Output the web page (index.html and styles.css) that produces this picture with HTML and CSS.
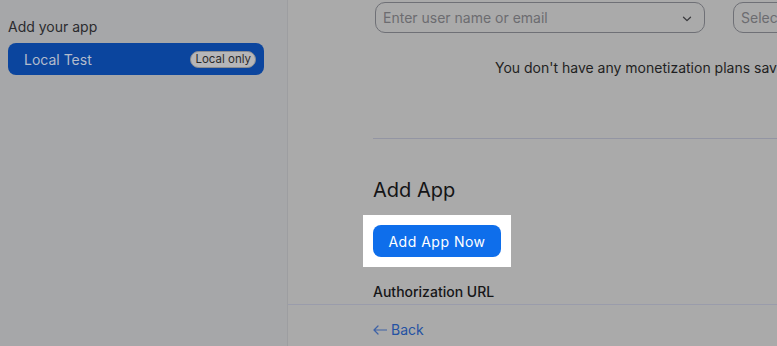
FILE: index.html
```html
<!DOCTYPE html>
<html lang="en">
<head>
<meta charset="utf-8">
<title>Add App</title>
<link rel="stylesheet" href="styles.css">
</head>
<body>
<div class="layout">
  <aside class="sidebar">
    <div class="side-title">Add your app</div>
    <div class="app-item">
      <span class="app-name">Local Test</span>
      <span class="badge">Local only</span>
    </div>
  </aside>
  <main class="main">
    <div class="content">
      <div class="filters">
        <div class="field user-field">
          <span class="placeholder">Enter user name or email</span>
          <svg class="chev" width="10" height="6" viewBox="0 0 10 6"><path d="M1.5 1.2 L5 4.6 L8.5 1.2" fill="none" stroke="#3a3a3d" stroke-width="1.3" stroke-linecap="round" stroke-linejoin="round"/></svg>
        </div>
        <div class="field select-field">
          <span class="placeholder">Select</span>
        </div>
      </div>
      <p class="empty-msg">You don't have any monetization plans saved yet.</p>
      <hr class="divider">
      <h2 class="section-title">Add App</h2>
      <div class="spotlight">
        <button class="btn-primary">Add App Now</button>
      </div>
      <div class="field-label">Authorization URL</div>
    </div>
    <footer class="footer">
      <a class="back-link" href="#">
        <svg width="14" height="10" viewBox="0 0 14 10"><path d="M13.5 5 H1 M5 1 L1 5 L5 9" fill="none" stroke="#3e62a6" stroke-width="1.2" stroke-linecap="round" stroke-linejoin="round"/></svg>
        <span>Back</span>
      </a>
    </footer>
  </main>
</div>
</body>
</html>
```
FILE: styles.css
```css
* { box-sizing: border-box; }
html, body {
  margin: 0;
  padding: 0;
  height: 100%;
  overflow: hidden;
}
body {
  font-family: Inter, "Noto Sans", "Liberation Sans", sans-serif;
  font-size: 14px;
  line-height: 20px;
  color: #1c1c1f;
  background: #aaaaaa;
}
.layout {
  display: flex;
  height: 346px;
}
.sidebar {
  width: 288px;
  flex: none;
  background: #a6a7a9;
  border-right: 1px solid #9d9ea1;
  padding: 17px 8px 0 8px;
}
.side-title {
  color: #2b2b2e;
  font-size: 14px;
  line-height: 20px;
}
.app-item {
  margin-top: 6px;
  width: 256px;
  height: 32px;
  background: #0b459e;
  border-radius: 8px;
  display: flex;
  align-items: center;
  justify-content: space-between;
  padding: 0 8px 0 16px;
}
.app-name {
  color: #b3bccc;
  font-size: 14px;
  margin-top: 1px;
}
.badge {
  height: 17px;
  line-height: 15px;
  font-size: 11.5px;
  color: #2a2a2c;
  background: #b6b6b8;
  border: 1px solid #8c8d90;
  border-radius: 9px;
  padding: 0 4px;
}
.main {
  flex: 1;
  min-width: 0;
  display: flex;
  flex-direction: column;
  overflow: hidden;
}
.content {
  height: 304px;
  flex: none;
  overflow: hidden;
  padding-left: 85px;
}
.filters {
  display: flex;
  gap: 28px;
  padding: 2px 0 0 2px;
  white-space: nowrap;
}
.field {
  height: 31px;
  border: 1px solid #6f7076;
  border-radius: 10px;
  display: flex;
  align-items: center;
  padding: 0 7px;
  flex: none;
}
.user-field {
  width: 330px;
  justify-content: space-between;
  padding-right: 12px;
}
.select-field {
  width: 160px;
}
.placeholder {
  color: #6c6c70;
  font-size: 14px;
}
.chev { display: block; margin-top: 2px; }
.empty-msg {
  margin: 25px 0 0 0;
  padding-left: 122px;
  white-space: nowrap;
  color: #1f1f22;
  font-size: 14px;
  line-height: 20px;
}
.divider {
  margin: 60px 0 0 0;
  border: 0;
  border-top: 1px solid #9395a3;
  height: 0;
}
.section-title {
  margin: 37px 0 0 0;
  font-size: 20px;
  line-height: 28px;
  font-weight: 400;
  color: #141416;
}
.spotlight {
  margin: 11px 0 0 -10px;
  width: 148px;
  padding: 10px;
  background: #ffffff;
}
.btn-primary {
  display: block;
  width: 128px;
  height: 32px;
  border: 0;
  border-radius: 8px;
  background: #0e6eeb;
  color: #ffffff;
  font-family: inherit;
  font-size: 14px;
  font-weight: 400;
  letter-spacing: 0.5px;
  padding: 0;
}
.field-label {
  margin-top: 15px;
  font-size: 14px;
  font-weight: 500;
  color: #161618;
}
.footer {
  flex: 1;
  border-top: 1px solid #9a9cab;
  padding: 15px 0 0 85px;
}
.back-link {
  display: inline-flex;
  align-items: center;
  gap: 4px;
  color: #2452a3;
  text-decoration: none;
  font-size: 14px;
}
.back-link svg { display: block; }
```
